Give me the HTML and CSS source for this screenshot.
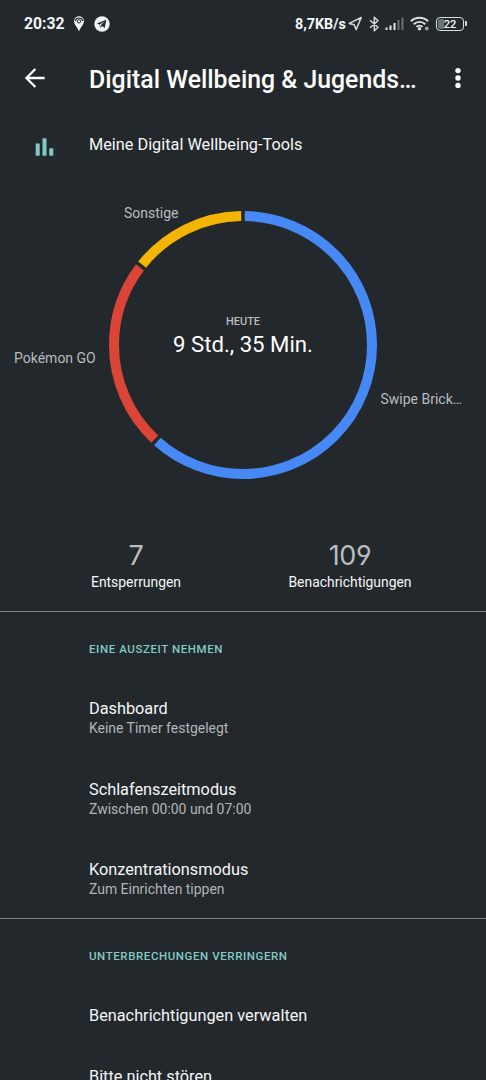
FILE: index.html
```html
<!DOCTYPE html>
<html lang="de">
<head>
<meta charset="utf-8">
<title>Digital Wellbeing</title>
<link rel="stylesheet" href="styles.css">
</head>
<body>
<div class="screen">
  <div class="status">
    <span class="clock">20:32</span>
    <svg class="pin" width="12" height="16" viewBox="0 0 12 16"><path d="M1 5.200a5 5 0 0 1 10 0c0 3-3.200 5.800-5 10C4.200 11 1 8.200 1 5.200z" fill="#f1f3f4"/><path d="M2.200 5a3.900 3.900 0 0 1 7.600 0" fill="none" stroke="#23282c" stroke-width="1.200"/><circle cx="6" cy="5.300" r="1.700" fill="#f1f3f4" stroke="#23282c" stroke-width="1"/></svg>
    <svg class="telegram" width="16" height="16" viewBox="0 0 16 16"><circle cx="8" cy="8" r="7.700" fill="#f1f3f4"/><path d="M12.300 3.700 2.900 7.500l2.500 1.100.9 3.200 1.700-1.700 2.700 2z" fill="#23282c"/><path d="M5.600 8.600 10.600 5.300 7 9.100l-.5 2z" fill="#f1f3f4"/></svg>
    <span class="speed">8,7KB/s</span>
    <svg class="location" width="15" height="15" viewBox="0 0 15 15"><path d="M13.300 1.500 1.200 7.400l5 1.300 1.900 4.900z" fill="none" stroke="#d5d8da" stroke-width="1.500" stroke-linejoin="round"/></svg>
    <svg class="bluetooth" width="11" height="16" viewBox="0 0 11 16"><path d="M1 4.300 9 11.300 5.300 14.800V1.200L9 4.700 1 11.700" fill="none" stroke="#d5d8da" stroke-width="1.500" stroke-linejoin="round"/></svg>
    <svg class="signal" width="19" height="14" viewBox="0 0 19 14"><g fill="#e3e6e8"><rect x=".5" y="10.500" width="2" height="2.500"/><rect x="4.500" y="8.500" width="2" height="4.500"/><rect x="8.500" y="6" width="2" height="7"/></g><g fill="#6b7073"><rect x="12.500" y="3" width="2" height="10"/><rect x="16.500" y=".5" width="2" height="12.500"/></g></svg>
    <svg class="wifi" width="20" height="15" viewBox="0 0 20 15"><g fill="none" stroke="#dfe2e4" stroke-width="1.900"><path d="M.9 5.200a12.500 12.500 0 0 1 17.200 0"/><path d="M3.700 8.200a8.400 8.400 0 0 1 11.600 0"/><path d="M6.400 10.900a4.500 4.500 0 0 1 6.200 0"/></g><circle cx="9.500" cy="12.800" r="1.700" fill="#dfe2e4"/><rect x="15" y="10.700" width="3.500" height="3.500" rx="1" fill="#9b9fa2"/></svg>
    <div class="battery"><span class="cell">22</span><span class="cap"></span></div>
  </div>

  <div class="toolbar">
    <svg class="back" width="22" height="22" viewBox="0 0 22 22"><path d="M20.600 11H2.600M11.400 2 2.400 11l9 9" fill="none" stroke="#fff" stroke-width="2.300"/></svg>
    <h1 class="title">Digital Wellbeing &amp; Jugends…</h1>
    <svg class="more" width="6" height="22" viewBox="0 0 6 22"><g fill="#fff"><circle cx="3" cy="3.600" r="2.700"/><circle cx="3" cy="11" r="2.700"/><circle cx="3" cy="18.400" r="2.700"/></g></svg>
  </div>

  <div class="tools">
    <svg class="bars" width="19" height="18" viewBox="0 0 19 18"><g fill="#80cbc4"><rect x=".7" y="5.500" width="4" height="12.200"/><rect x="7.500" y=".3" width="4" height="17.400"/><rect x="14.300" y="10.300" width="4" height="7.400"/></g></svg>
    <span class="name">Meine Digital Wellbeing-Tools</span>
  </div>

  <div class="chart">
    <svg class="ring" width="270" height="270" viewBox="0 0 270 270">
      <g fill="none" stroke-width="10" transform="rotate(-90 135 135)">
        <circle cx="135" cy="135" r="129" pathLength="360" stroke="#4688f4" stroke-dasharray="220.800 139.200" stroke-dashoffset="-.8"/>
        <circle cx="135" cy="135" r="129" pathLength="360" stroke="#db4538" stroke-dasharray="83.800 276.200" stroke-dashoffset="-223.200"/>
        <circle cx="135" cy="135" r="129" pathLength="360" stroke="#f4b502" stroke-dasharray="50.600 309.400" stroke-dashoffset="-308.600"/>
      </g>
    </svg>
    <div class="total"><span class="day">HEUTE</span><span class="time">9 Std., 35 Min.</span></div>
    <span class="label other">Sonstige</span>
    <span class="label pokemon">Pokémon GO</span>
    <span class="label swipe">Swipe Brick…</span>
  </div>

  <div class="stats">
    <div class="stat"><span class="number">7</span><span class="caption">Entsperrungen</span></div>
    <div class="stat"><span class="number">109</span><span class="caption">Benachrichtigungen</span></div>
  </div>

  <section class="group">
    <h2 class="heading">EINE AUSZEIT NEHMEN</h2>
    <div class="item"><span class="name">Dashboard</span><span class="detail">Keine Timer festgelegt</span></div>
    <div class="item"><span class="name">Schlafenszeitmodus</span><span class="detail">Zwischen 00:00 und 07:00</span></div>
    <div class="item"><span class="name">Konzentrationsmodus</span><span class="detail">Zum Einrichten tippen</span></div>
  </section>
  <section class="group">
    <h2 class="heading">UNTERBRECHUNGEN VERRINGERN</h2>
    <div class="item single"><span class="name">Benachrichtigungen verwalten</span></div>
    <div class="item single"><span class="name">Bitte nicht stören</span></div>
  </section>
</div>
</body>
</html>
```
FILE: styles.css
```css
* { box-sizing: border-box; }
body { margin: 0; background: #23282c; }
.screen {
  width: 486px;
  height: 1080px;
  overflow: hidden;
  background: #23282c;
  color: #f5f6f7;
  font-family: Roboto, sans-serif;
  white-space: nowrap;
}
svg { display: block; flex: none; }
h1, h2 { margin: 0; }

.status { display: flex; align-items: center; height: 47px; padding-left: 24px; }
.clock { width: 40px; font-size: 15.7px; font-weight: 700; }
.pin { margin-left: 9px; }
.telegram { margin-left: 9px; }
.speed { width: 51px; margin-left: 185px; font-size: 14.3px; font-weight: 700; line-height: 18px; }
.location { margin-left: 2px; }
.bluetooth { margin-left: 6px; }
.signal { margin-left: 5px; margin-top: 1px; }
.wifi { margin-left: 6px; }
.battery { display: flex; align-items: center; margin-left: 6px; }
.cell {
  width: 28px;
  height: 14px;
  border: 1.8px solid #d9dcde;
  border-radius: 4px;
  background: linear-gradient(90deg, #6d7275 0 6px, transparent 6px) content-box;
  padding: 1px;
  font-size: 11px;
  font-weight: 500;
  line-height: 11px;
  text-align: center;
}
.cap { width: 2px; height: 5px; margin-left: 1px; border-radius: 0 1px 1px 0; background: #d9dcde; }

.toolbar { display: flex; align-items: center; height: 64px; padding-left: 24px; }
.back { margin-bottom: 2px; }
.title { width: 328px; margin-left: 43px; margin-top: 1px; font-size: 24.85px; font-weight: 500; color: #fff; }
.more { margin-left: 38px; margin-bottom: 2px; }

.tools { display: flex; align-items: center; height: 67px; padding-left: 35px; }
.tools .name { margin-left: 35px; }
.bars { margin-top: 5px; }

.name { font-size: 16.3px; line-height: 22px; }

.chart { position: relative; height: 348px; padding: 32px 108px 0; }
.total {
  position: absolute;
  top: 135px;
  left: 108px;
  width: 270px;
  display: flex;
  flex-direction: column;
  align-items: center;
}
.day { font-size: 11px; font-weight: 500; line-height: 18px; color: #b8bcbf; }
.time { font-size: 22.2px; line-height: 26px; color: #fff; }
.label { position: absolute; font-size: 14px; line-height: 18px; color: #b8bcbf; }
.other { top: 26px; left: 124px; }
.pokemon { top: 171px; left: 14px; }
.swipe { top: 212px; left: 380.5px; }

.stats {
  display: grid;
  grid-template-columns: 214px 214px;
  justify-content: center;
  height: 85px;
  padding-top: 14px;
}
.stat { display: flex; flex-direction: column; align-items: center; }
.number {
  font: 400 27px/32px Inter, sans-serif;
  font-feature-settings: "ss01";
  letter-spacing: -.4px;
  color: #b9bdc0;
}
.caption { font-size: 13.9px; line-height: 20px; }

.group { height: 307px; padding-left: 89px; border-top: 1px solid #7f8386; }
.heading {
  padding-top: 28px;
  margin-bottom: 40px;
  font-size: 11.5px;
  font-weight: 500;
  line-height: 18px;
  letter-spacing: .58px;
  color: #80cbc4;
}
.item { display: flex; flex-direction: column; height: 80.5px; }
.detail { margin-top: -1px; font-size: 13.95px; line-height: 19px; color: #b1b5b8; }
.single { height: 61px; }
```
